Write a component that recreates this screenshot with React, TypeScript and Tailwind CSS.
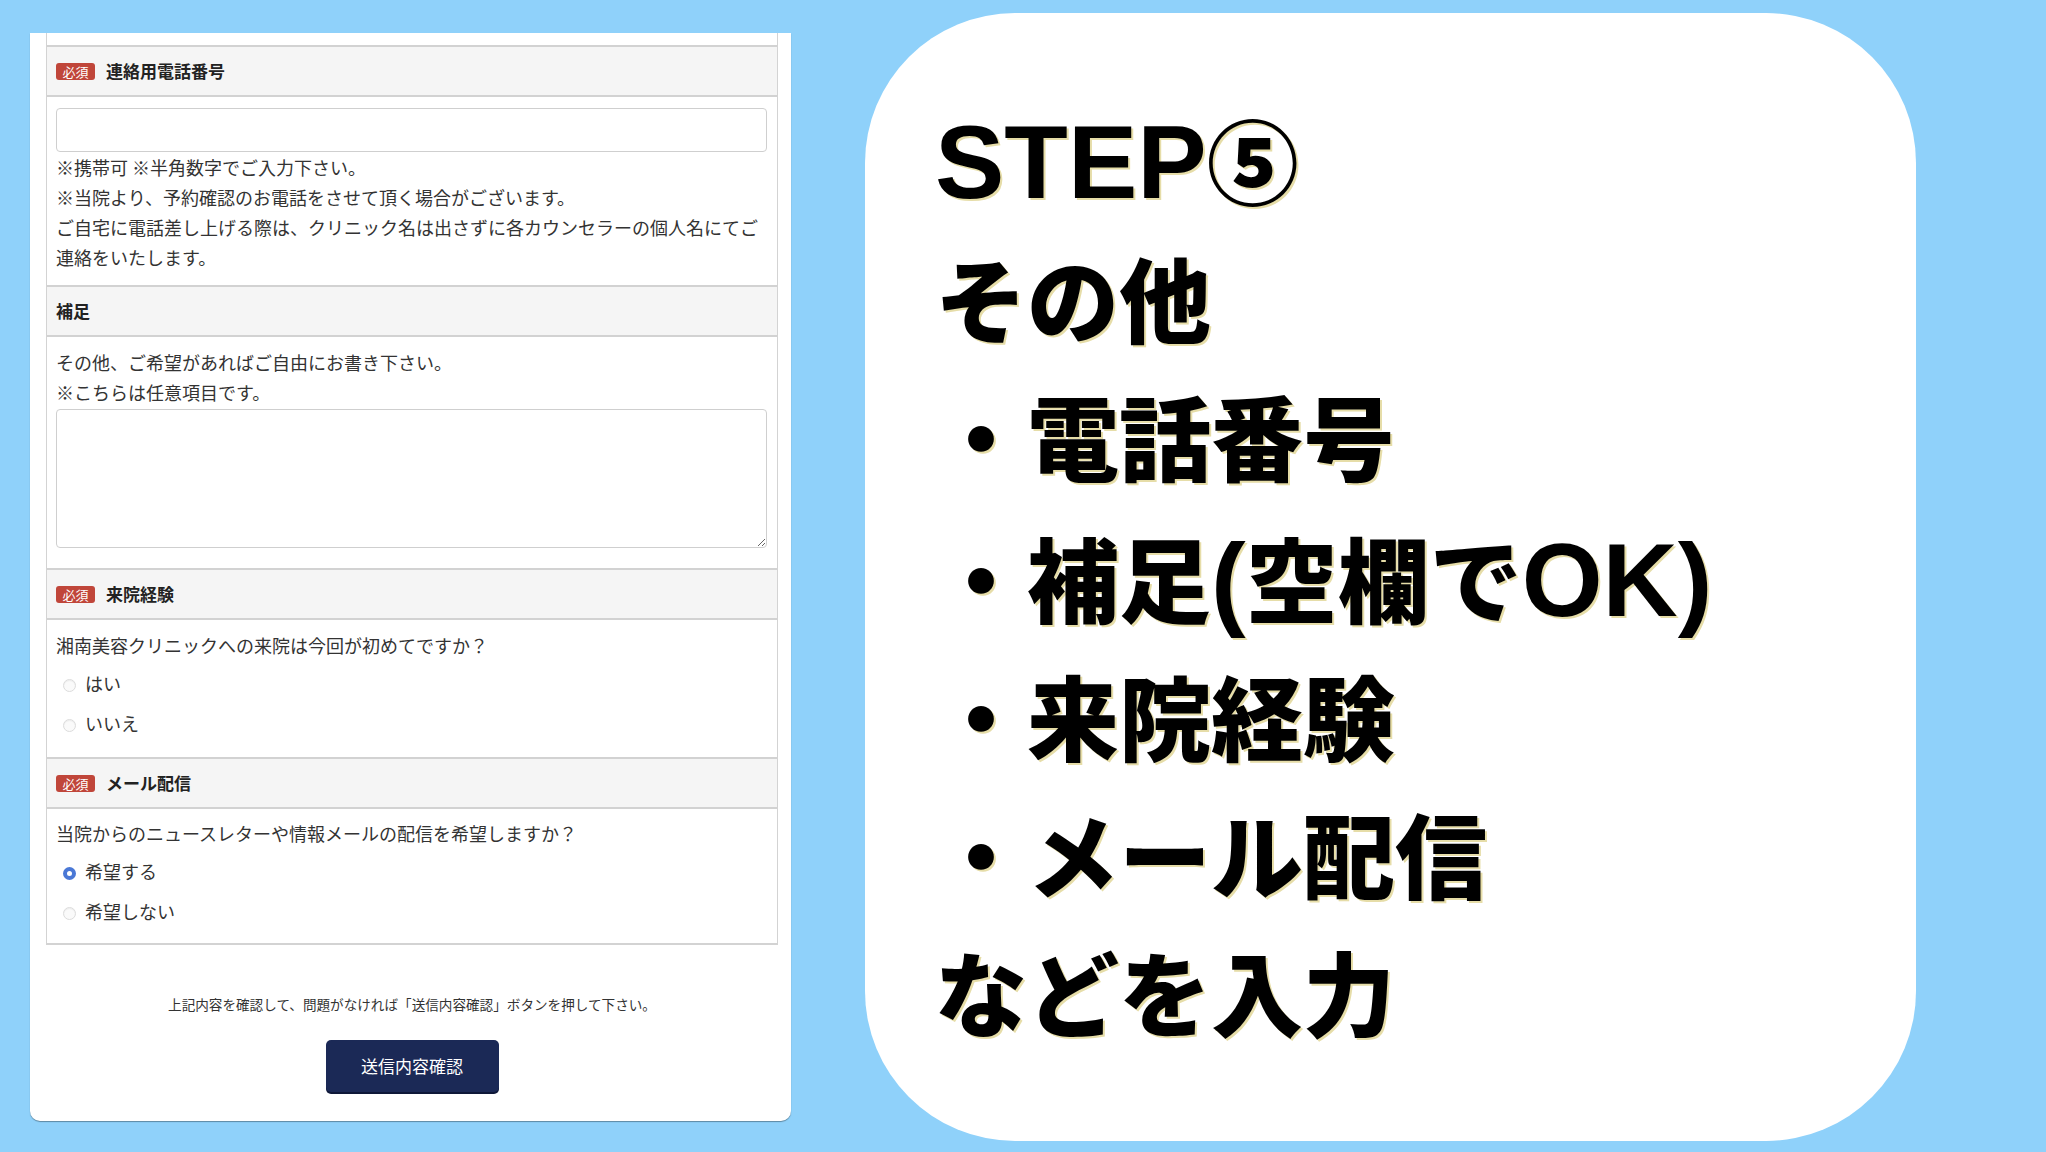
import React from "react";

const bodyText = "text-[18px] leading-[30px] text-[#333]";

function Badge() {
  return (
    <span className="inline-flex h-[17px] w-[39px] items-center justify-center rounded-[3px] bg-[#c0463a] text-[13px] leading-none text-white">
      必須
    </span>
  );
}

function Header({ title, required }: { title: string; required?: boolean }) {
  return (
    <div className="flex h-[52px] items-center gap-[11px] border-y-2 border-[#d2d2d2] bg-[#f5f5f5] pl-[9px]">
      {required ? <Badge /> : null}
      <span className="text-[17px] font-bold text-[#222]">{title}</span>
    </div>
  );
}

function Radio({ label, checked }: { label: string; checked?: boolean }) {
  return (
    <div className="flex h-[40px] items-center">
      <span
        className={
          checked
            ? "ml-[7px] mt-[5px] h-[13px] w-[13px] rounded-full border-[4px] border-[#4a78d6] bg-white"
            : "ml-[7px] mt-[5px] h-[13px] w-[13px] rounded-full border border-[#dcdcdc] bg-[#fafafa] shadow-[inset_0_1px_1px_rgba(0,0,0,0.06)]"
        }
      />
      <span className={`ml-[9px] ${bodyText}`}>{label}</span>
    </div>
  );
}

function FormPanel() {
  return (
    <div className="ml-[30px] mt-[33px] flex h-[1088px] w-[761px] flex-col rounded-b-[10px] bg-white pl-[16px] pr-[13px] shadow-[0_1px_1px_rgba(0,0,0,0.35)] font-['Noto_Sans_CJK_JP',sans-serif]">
      <div className="w-[732px] border-x border-b-2 border-[#d3d3d3]">
        <div className="h-[12px]" />

        <Header title="連絡用電話番号" required />
        <div className="pb-[13px] pl-[9px] pr-[10px] pt-[11px]">
          <input className="block h-[44px] w-full rounded-[4px] border border-[#cfcfcf] bg-white" />
          <p className={bodyText}>※携帯可 ※半角数字でご入力下さい。</p>
          <p className={bodyText}>※当院より、予約確認のお電話をさせて頂く場合がございます。</p>
          <p className={bodyText}>
            ご自宅に電話差し上げる際は、クリニック名は出さずに各カウンセラーの個人名にてご連絡をいたします。
          </p>
        </div>

        <Header title="補足" />
        <div className="pb-[20px] pl-[9px] pr-[10px] pt-[10px]">
          <p className={bodyText}>その他、ご希望があればご自由にお書き下さい。</p>
          <p className={bodyText}>※こちらは任意項目です。</p>
          <textarea className="mt-[2px] block h-[139px] w-full rounded-[4px] border border-[#cfcfcf] bg-white" />
        </div>

        <Header title="来院経験" required />
        <div className="pb-[14px] pl-[9px] pr-[10px] pt-[10px]">
          <p className={bodyText}>湘南美容クリニックへの来院は今回が初めてですか？</p>
          <div className="pt-[3px]">
            <Radio label="はい" />
            <Radio label="いいえ" />
          </div>
        </div>

        <Header title="メール配信" required />
        <div className="pb-[12px] pl-[9px] pr-[10px] pt-[9px]">
          <p className={bodyText}>当院からのニュースレターや情報メールの配信を希望しますか？</p>
          <div className="pt-[3px]">
            <Radio label="希望する" checked />
            <Radio label="希望しない" />
          </div>
        </div>
      </div>

      <p className="mt-[49px] text-center text-[13.6px] leading-[20px] text-[#333]">
        上記内容を確認して、問題がなければ「送信内容確認」ボタンを押して下さい。
      </p>
      <div className="mt-[26px] flex justify-center">
        <button className="h-[52px] w-[173px] rounded-[5px] bg-[#1b2956] text-[17px] text-white shadow-[0_2px_0_#0f1838]">
          送信内容確認
        </button>
      </div>
    </div>
  );
}

const plainLines = ["その他", "・電話番号"];
const laterLines = ["・来院経験", "・メール配信", "などを入力"];

function StepPanel() {
  return (
    <div className="ml-[74px] mt-[13px] h-[1128px] w-[1051px] rounded-[150px] bg-white pl-[70px] pt-[76px]">
      <div className="font-['Liberation_Sans','Noto_Sans_CJK_JP',sans-serif] text-[92px] font-black leading-[138px] text-black [text-shadow:2px_2px_0_#e6dda8]">
        <div className="whitespace-nowrap">
          <span className="text-[104px]">STEP</span>
          <span className="font-['Noto_Sans_CJK_JP',sans-serif]">⑤</span>
        </div>
        {plainLines.map((line) => (
          <div key={line} className="whitespace-nowrap">
            {line}
          </div>
        ))}
        <div className="whitespace-nowrap">
          ・補足<span className="text-[104px]">(</span>空欄で<span className="text-[104px]">OK)</span>
        </div>
        {laterLines.map((line) => (
          <div key={line} className="whitespace-nowrap">
            {line}
          </div>
        ))}
      </div>
    </div>
  );
}

export default function App() {
  return (
    <div className="flex h-[1152px] w-[2046px] items-start overflow-hidden bg-[#8fd1fa]">
      <FormPanel />
      <StepPanel />
    </div>
  );
}
